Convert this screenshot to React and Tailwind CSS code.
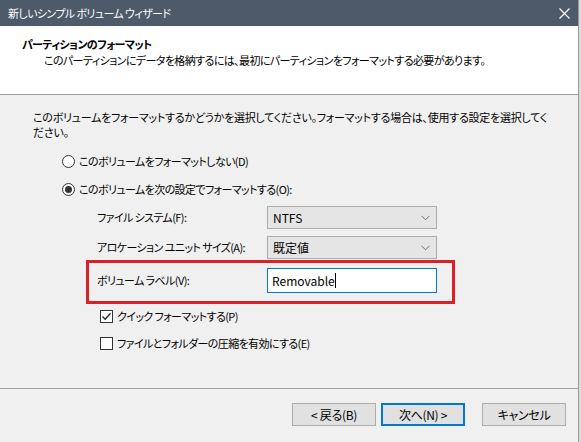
const FONT = "font-['Noto_Sans_CJK_JP','Noto_Sans',sans-serif] [font-feature-settings:'palt']";

function Radio({ checked, label }) {
  return (
    <div className="flex items-center h-[20px]">
      <span className="w-[13px] h-[13px] rounded-full border border-[#333] bg-white flex items-center justify-center">
        {checked && <span className="w-[7px] h-[7px] rounded-full bg-[#333]" />}
      </span>
      <span className="ml-[4px]">{label}</span>
    </div>
  );
}

function Check({ checked, label }) {
  return (
    <div className="flex items-center h-[16px]">
      <span className="w-[13px] h-[13px] border border-[#333] bg-white flex items-center justify-center">
        {checked && (
          <svg width="11" height="11" viewBox="0 0 11 11">
            <path d="M1.5 5.5 L4.2 8.3 L9.5 2.2" fill="none" stroke="#222" strokeWidth="1.3" />
          </svg>
        )}
      </span>
      <span className="ml-[4px]">{label}</span>
    </div>
  );
}

function Combo({ value }) {
  return (
    <div className="w-[170px] h-[23px] bg-[#e5e5e5] border border-[#adadad] flex items-center justify-between pl-[5px] pr-[6px]">
      <span className="text-[12px] tracking-normal">{value}</span>
      <svg width="9" height="6" viewBox="0 0 9 6">
        <path d="M0.5 0.8 L4.5 4.8 L8.5 0.8" fill="none" stroke="#707070" strokeWidth="1" />
      </svg>
    </div>
  );
}

function Button({ children, primary }) {
  return (
    <div
      className={`w-[84px] h-[23px] flex items-center justify-center bg-[#e1e1e1] text-[12px] tracking-[-0.3px] ${
        primary ? 'border-2 border-[#0078d7]' : 'border border-[#adadad]'
      }`}
    >
      {children}
    </div>
  );
}

export default function App() {
  return (
    <div className={`${FONT} w-[581px] h-[442px] flex bg-[#dcdcdc] text-[11px] tracking-[-0.6px] leading-[15px] text-black overflow-hidden whitespace-nowrap`}>
      <div className="w-[579px] flex flex-col bg-[#f0f0f0] border-r border-[#9a9a9a]">
        {/* Title bar */}
        <div className="h-[26px] bg-[#4d5a69] flex items-center justify-between pl-[8px] pr-[8px] text-white">
          <span>新しいシンプル ボリューム ウィザード</span>
          <svg width="11" height="11" viewBox="0 0 11 11">
            <path d="M0.5 0.5 L10.5 10.5 M10.5 0.5 L0.5 10.5" stroke="#fff" strokeWidth="1.2" />
          </svg>
        </div>

        {/* Header */}
        <div className="h-[69px] bg-white border-b border-[#a0a0a0] pl-[22px] pt-[11px]">
          <div className="font-bold">パーティションのフォーマット</div>
          <div className="pl-[22px] mt-[1px]">
            このパーティションにデータを格納するには、最初にパーティションをフォーマットする必要があります。
          </div>
        </div>

        {/* Body */}
        <div className="flex-1 pt-[15px]">
          <p className="pl-[33px] tracking-[-0.25px]">
            このボリュームをフォーマットするかどうかを選択してください。フォーマットする場合は、使用する設定を選択してく
            <br />
            ださい。
          </p>

          <div className="pl-[62px] mt-[11px] flex flex-col gap-[8px]">
            <Radio label="このボリュームをフォーマットしない(D)" />
            <Radio checked label="このボリュームを次の設定でフォーマットする(O):" />
          </div>

          <div className="pl-[86px] mt-[7px] flex flex-col">
            <div className="flex items-center pl-[11px]">
              <span className="w-[170px]">ファイル システム(F):</span>
              <Combo value="NTFS" />
            </div>
            <div className="flex items-center pl-[11px] mt-[7px]">
              <span className="w-[170px]">アロケーション ユニット サイズ(A):</span>
              <Combo value="既定値" />
            </div>

            <div className="w-[369px] mt-[1px] border-[3px] border-[#dc2027] pl-[8px] pt-[5px] pb-[8px] flex items-center">
              <span className="w-[170px]">ボリューム ラベル(V):</span>
              <div className="w-[170px] h-[25px] bg-white border border-[#0078d7] flex items-center pl-[4px]">
                <span className="text-[12px] tracking-normal">Removable</span>
                <span className="w-px h-[15px] bg-black" />
              </div>
            </div>

            <div className="pl-[14px] mt-[4px] flex flex-col gap-[11px]">
              <Check checked label="クイック フォーマットする(P)" />
              <Check label="ファイルとフォルダーの圧縮を有効にする(E)" />
            </div>
          </div>
        </div>

        {/* Footer */}
        <div className="h-[54px] border-t border-[#a0a0a0] flex items-center justify-end pr-[12px] pb-[2px]">
          <Button>&lt; 戻る(B)</Button>
          <div className="ml-[5px]">
            <Button primary>次へ(N) &gt;</Button>
          </div>
          <div className="ml-[17px]">
            <Button>キャンセル</Button>
          </div>
        </div>
      </div>
    </div>
  );
}
